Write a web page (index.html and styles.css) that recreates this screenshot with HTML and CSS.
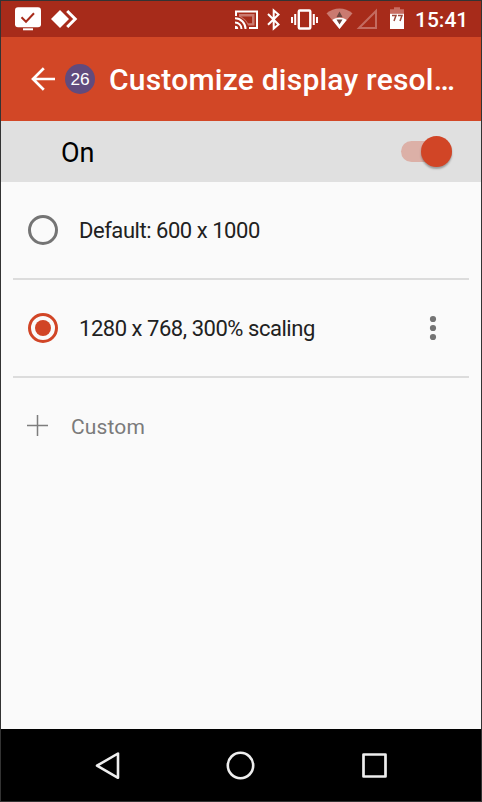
FILE: index.html
```html
<!DOCTYPE html>
<html lang="en">
<head>
<meta charset="utf-8">
<title>Customize display resolution</title>
<link rel="stylesheet" href="styles.css">
</head>
<body>
<div class="phone">
  <header class="status">
    <div class="status-left">
      <svg width="28" height="36" viewBox="14 1 28 36"><rect x="15" y="7.300" width="26" height="20" rx="3" fill="#fff"/><path d="M23 28.300h10v2H23z" fill="#fff"/><path d="M21.500 17.300l4.500 4.500 8-8.500" fill="none" stroke="#a72b1a" stroke-width="2"/></svg>
      <svg width="28" height="36" viewBox="50 1 28 36"><path d="M51 19l9-9 9 9-9 9z" fill="#fff"/><path d="M67.200 11l8 8-8 8" fill="none" stroke="#fff" stroke-width="3"/></svg>
    </div>
    <div class="status-right">
      <svg width="24" height="36" viewBox="235 1 24 36"><path d="M236 16v-4.500h21v16.500h-8" fill="none" stroke="#fff" stroke-width="2"/><path d="M239 14h15.500v11.500H248c-1-3.500-5-7.500-9-8.800z" fill="#ca7a70"/><path d="M241 16.500h11v6.700h-4c-1.500-2.700-4-5-7-6.700z" fill="#a72b1a"/><g fill="none" stroke="#fff" stroke-width="2"><path d="M235 18.300a10.500 10.500 0 0 1 10.500 10.700M235 22.400a6.500 6.500 0 0 1 6.500 6.600"/></g><path d="M235 25.800a3.200 3.200 0 0 1 3.200 3.200H235z" fill="#fff"/></svg>
      <svg width="16" height="36" viewBox="266 1 16 36"><path d="M268 14l10.500 10.500-4.800 4V10.500l4.800 4L268 24.800" fill="none" stroke="#fff" stroke-width="2"/></svg>
      <svg width="28" height="36" viewBox="291 1 28 36"><rect x="298.800" y="10.500" width="11.500" height="18" rx="1" fill="none" stroke="#fff" stroke-width="2.400"/><path d="M292 17v6M295.200 14v11M313.800 14v11M317 17v6" stroke="#fff" stroke-width="2"/></svg>
      <svg width="28" height="36" viewBox="326 1 28 36"><path d="M326.500 13.300c7.500-6.300 18.500-6.300 26 0L339.500 29z" fill="#ca7a70"/><path d="M332.300 20c4-3 10.400-3 14.400 0L339.500 29z" fill="#fff"/><path d="M339.500 11.500l3 5.500h-6zM336.500 19.500h6l-3 5z" fill="#6c463f"/></svg>
      <svg width="22" height="36" viewBox="356 1 22 36"><path d="M359 28L376 11v17z" fill="none" stroke="#c46b60" stroke-width="2"/></svg>
      <svg class="battery" width="16" height="36" viewBox="389 1 16 36"><path d="M390 9.300h4v-2h6v2h4V15h-14z" fill="#c76c61"/><path d="M390 13.800h14V29h-14z" fill="#fff"/><path d="M392 15.500h4l-2 5.500M398 15.500h4l-2 5.500" fill="none" stroke="#9c493c" stroke-width="1.500"/></svg>
      <span class="clock">15:41</span>
    </div>
  </header>
  <div class="appbar">
    <svg class="back" width="26" height="26" viewBox="30 66 26 26"><path d="M55 79H33M43.800 68.200L33 79l10.800 10.800" fill="none" stroke="#fff" stroke-width="2.700"/></svg>
    <span class="badge">26</span>
    <h1 class="title">Customize display resol…</h1>
  </div>
  <div class="toggle-row">
    <span class="toggle-label">On</span>
    <span class="switch"><span class="thumb"></span></span>
  </div>
  <main class="list">
    <div class="item">
      <span class="radio"></span>
      <span class="item-text">Default: 600 x 1000</span>
    </div>
    <div class="item">
      <span class="radio radio-on"></span>
      <span class="item-text">1280 x 768, 300% scaling</span>
      <svg class="more" width="8" height="26" viewBox="0 0 8 26"><g fill="#747474"><circle cx="4" cy="4" r="3.100"/><circle cx="4" cy="13" r="3.100"/><circle cx="4" cy="22" r="3.100"/></g></svg>
    </div>
    <div class="item item-add">
      <svg width="22" height="22" viewBox="0 0 22 22"><path d="M0 10.500h21M10.500 0v21" stroke="#7d7d7d" stroke-width="1.500"/></svg>
      <span class="custom">Custom</span>
    </div>
  </main>
  <nav class="nav">
    <svg width="32" height="32" viewBox="92 750 32 32"><path d="M118 753.500v24.300L97 765.700z" fill="none" stroke="#eee" stroke-width="2.600" stroke-linejoin="round"/></svg>
    <svg width="32" height="32" viewBox="225 750 32 32"><circle cx="240.500" cy="765.500" r="12.700" fill="none" stroke="#eee" stroke-width="2.600"/></svg>
    <svg width="32" height="32" viewBox="358 750 32 32"><rect x="363.500" y="754.500" width="22" height="22" fill="none" stroke="#eee" stroke-width="2.700" stroke-linejoin="round"/></svg>
  </nav>
</div>
</body>
</html>
```

FILE: styles.css
```css
* { box-sizing: border-box; }
body { margin: 0; font-family: Roboto, sans-serif; }
svg { display: block; flex: none; }
.phone {
  width: 482px;
  height: 802px;
  border: 1px solid #333;
  background: #fafafa;
  display: flex;
  flex-direction: column;
  overflow: hidden;
}
.status {
  height: 36px;
  flex: none;
  background: #a72b1a;
  display: flex;
  justify-content: space-between;
  padding: 0 13px;
}
.status-left { display: flex; gap: 8px; }
.status-right { display: flex; }
.status-right svg { margin-right: 7px; }
.status-right svg:nth-child(2) { margin-right: 9px; }
.status-right svg:nth-child(4) { margin-right: 2px; }
.status-right svg:nth-child(5) { margin-right: 11px; }
.status-right .battery { margin-right: 10px; }
.clock {
  width: 53px;
  color: #fff;
  font-size: 21px;
  font-weight: 500;
  line-height: 38px;
  white-space: nowrap;
}
.appbar {
  height: 84px;
  flex: none;
  background: #d24726;
  display: flex;
  align-items: center;
  padding-left: 29px;
}
.badge {
  width: 30px;
  height: 30px;
  margin: 0 14px 0 9px;
  border-radius: 50%;
  background: #614b7d;
  color: #fff;
  font: 17.3px/30px "Liberation Sans", sans-serif;
  text-align: center;
}
.title {
  margin: 0;
  padding-top: 2px;
  color: #fff;
  font-size: 30px;
  font-weight: 500;
  line-height: 40px;
  letter-spacing: 0.22px;
  white-space: nowrap;
}
.toggle-row {
  height: 61px;
  flex: none;
  background: #e0e0e0;
  display: flex;
  align-items: center;
  justify-content: space-between;
  padding: 0 29px 0 60px;
}
.toggle-label { font-size: 27px; line-height: 32px; padding-top: 2px; }
.switch {
  width: 51px;
  height: 21px;
  border-radius: 11px;
  background: #dcb0a7;
  display: flex;
  align-items: center;
  justify-content: flex-end;
}
.thumb {
  width: 31px;
  height: 31px;
  flex: none;
  border-radius: 50%;
  background: #d14526;
  box-shadow: 0 2px 2px rgba(0, 0, 0, 0.3);
}
.list { flex: 1; padding: 0 12px; }
.item {
  height: 98px;
  border-bottom: 2px solid #dcdcdc;
  display: flex;
  align-items: center;
  padding: 0 32px 0 15px;
}
.radio {
  width: 30px;
  height: 30px;
  flex: none;
  border: 3px solid #747474;
  border-radius: 50%;
  display: flex;
  align-items: center;
  justify-content: center;
}
.radio-on { border-color: #d14526; }
.radio-on::after {
  content: "";
  width: 16px;
  height: 16px;
  border-radius: 50%;
  background: #d14526;
}
.item-text {
  margin-left: 21px;
  padding-top: 1px;
  color: #212121;
  font-size: 22px;
  line-height: 28px;
  letter-spacing: -0.46px;
  white-space: nowrap;
}
.more { margin-left: auto; }
.item-add { border: 0; padding-left: 14px; padding-bottom: 2px; }
.custom {
  margin: 1px 0 0 22px;
  color: #7b7b7b;
  font-size: 21px;
  line-height: 28px;
  letter-spacing: 0.15px;
}
.nav {
  height: 72px;
  flex: none;
  background: #000;
  display: flex;
  align-items: center;
  justify-content: space-between;
  padding: 2px 91px 0;
}
```
